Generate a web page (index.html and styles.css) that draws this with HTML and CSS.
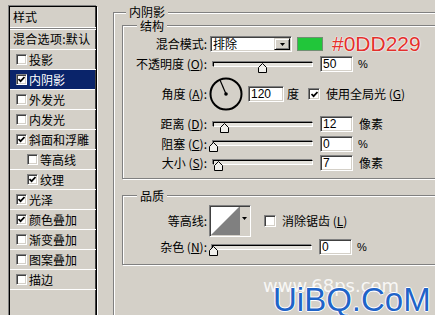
FILE: index.html
```html
<!DOCTYPE html>
<html lang="zh-CN">
<head>
<meta charset="utf-8">
<title>图层样式 - 内阴影</title>
<link rel="stylesheet" href="styles.css">
</head>
<body>
<div class="dlg">
  <div class="list">
    <div class="item head">样式</div>
    <div class="item blend">混合选项:默认</div>
    <div class="item"><span class="cb"></span>投影</div>
    <div class="item sel"><span class="cb"><svg viewBox="0 0 7 7"><polyline points="0.5,3 2.6,5.2 6.5,1"/></svg></span>内阴影</div>
    <div class="item"><span class="cb"></span>外发光</div>
    <div class="item"><span class="cb"></span>内发光</div>
    <div class="item"><span class="cb"><svg viewBox="0 0 7 7"><polyline points="0.5,3 2.6,5.2 6.5,1"/></svg></span>斜面和浮雕</div>
    <div class="item sub"><span class="cb"></span>等高线</div>
    <div class="item sub"><span class="cb"><svg viewBox="0 0 7 7"><polyline points="0.5,3 2.6,5.2 6.5,1"/></svg></span>纹理</div>
    <div class="item"><span class="cb"><svg viewBox="0 0 7 7"><polyline points="0.5,3 2.6,5.2 6.5,1"/></svg></span>光泽</div>
    <div class="item"><span class="cb"><svg viewBox="0 0 7 7"><polyline points="0.5,3 2.6,5.2 6.5,1"/></svg></span>颜色叠加</div>
    <div class="item"><span class="cb"></span>渐变叠加</div>
    <div class="item"><span class="cb"></span>图案叠加</div>
    <div class="item"><span class="cb"></span>描边</div>
  </div>

  <fieldset class="fs outer">
    <legend class="lg-outer">内阴影</legend>

    <fieldset class="fs inner struct">
      <legend class="lg-inner">结构</legend>

      <div class="row h20">
        <span class="lbl">混合模式:</span>
        <div class="field select"><span class="sel-text">排除</span><span class="drop"><svg viewBox="0 0 5 3"><polygon points="0,0 5,0 2.5,3"/></svg></span></div>
        <span class="swatch"></span>
        <span class="hex">#0DD229</span>
      </div>

      <div class="row h20">
        <span class="lbl">不透明度 (<u>O</u>):</span>
        <div class="track ml6"><span class="thumb" style="left:44px"><svg viewBox="0 0 9 10"><path d="M4.5 0.5 L8.5 4.5 V9.5 H0.5 V4.5 Z"/></svg></span></div>
        <div class="field num">50</div>
        <span class="unit pct">%</span>
      </div>

      <div class="row h40">
        <span class="lbl">角度 (<u>A</u>):</span>
        <svg class="dial" viewBox="0 0 34 34"><circle cx="17" cy="17" r="15.5"/><line x1="17" y1="17" x2="11" y2="3"/><circle class="dot" cx="17" cy="17" r="1.8"/></svg>
        <div class="field num angle">120</div>
        <span class="deg">度</span>
        <span class="cb big glob"><svg viewBox="0 0 7 7"><polyline points="0.5,3 2.6,5.2 6.5,1"/></svg></span>
        <span class="cbtext">使用全局光 (<u>G</u>)</span>
      </div>

      <div class="row h20">
        <span class="lbl">距离 (<u>D</u>):</span>
        <div class="track ml6"><span class="thumb" style="left:6px"><svg viewBox="0 0 9 10"><path d="M4.5 0.5 L8.5 4.5 V9.5 H0.5 V4.5 Z"/></svg></span></div>
        <div class="field num">12</div>
        <span class="unit">像素</span>
      </div>

      <div class="row h19">
        <span class="lbl">阻塞 (<u>C</u>):</span>
        <div class="track ml6"><span class="thumb" style="left:-5px"><svg viewBox="0 0 9 10"><path d="M4.5 0.5 L8.5 4.5 V9.5 H0.5 V4.5 Z"/></svg></span></div>
        <div class="field num">0</div>
        <span class="unit pct">%</span>
      </div>

      <div class="row h19">
        <span class="lbl">大小 (<u>S</u>):</span>
        <div class="track ml6"><span class="thumb" style="left:0px"><svg viewBox="0 0 9 10"><path d="M4.5 0.5 L8.5 4.5 V9.5 H0.5 V4.5 Z"/></svg></span></div>
        <div class="field num">7</div>
        <span class="unit">像素</span>
      </div>
    </fieldset>

    <fieldset class="fs inner quality">
      <legend class="lg-inner">品质</legend>

      <div class="row h37">
        <span class="lbl">等高线:</span>
        <div class="field contour">
          <svg viewBox="0 0 38 28"><rect x="0" y="0" width="28" height="28" fill="#fff"/><polygon points="0,28 28,0 28,28" fill="#808080"/><rect x="28" y="0" width="10" height="28" fill="#d4d0c8"/><line x1="28.5" y1="0" x2="28.5" y2="28" stroke="#808080"/><polygon points="31,10 36,10 33.5,13" fill="#000"/></svg>
        </div>
        <span class="cb big aa"></span>
        <span class="cbtext">消除锯齿 (<u>L</u>)</span>
      </div>

      <div class="row h16">
        <span class="lbl">杂色 (<u>N</u>):</span>
        <div class="track ml5"><span class="thumb" style="left:-4px"><svg viewBox="0 0 9 10"><path d="M4.5 0.5 L8.5 4.5 V9.5 H0.5 V4.5 Z"/></svg></span></div>
        <div class="field num">0</div>
        <span class="unit pct">%</span>
      </div>
    </fieldset>
  </fieldset>
</div>

<div class="wm wm-site">www.68ps.com</div>
<div class="wm wm-brand">UiBQ.CoM</div>
</body>
</html>
```

FILE: styles.css
```css
html, body {
  margin: 0;
  padding: 0;
}
body {
  width: 435px;
  height: 315px;
  overflow: hidden;
  position: relative;
  background: #d4d0c8;
  color: #000;
  font-family: "Noto Sans CJK SC", "Noto Sans", sans-serif;
  font-size: 12px;
  line-height: 14px;
}

.dlg {
  display: flex;
  align-items: flex-start;
  width: 640px;
  padding: 5px 0 0 9px;
}

/* ---------- left styles list ---------- */
.list {
  flex: none;
  width: 88px;
  height: 330px;
  margin-top: 1px;
  box-sizing: border-box;
  border: 1px solid #000;
  box-shadow: -1px -1px 0 #808080, 1px 1px 0 #fff, inset -1px 0 0 #404040;
  overflow: hidden;
}
.item {
  display: flex;
  align-items: center;
  height: 19px;
  border-bottom: 1px solid #fff;
  padding-left: 6px;
  white-space: nowrap;
  overflow: hidden;
}
.item .cb {
  margin-right: 2px;
}
.item.head {
  height: 20px;
  padding-left: 3px;
}
.item.blend {
  height: 20px;
  padding-left: 3px;
  border-top: 1px solid #808080;
  box-shadow: inset 0 1px 0 #fff;
  letter-spacing: 0.3px;
}
.item.sub {
  padding-left: 17px;
}
.item.sel {
  background: #0a246a;
  color: #fff;
  margin-right: 1px;
}

/* ---------- checkbox ---------- */
.cb {
  flex: none;
  width: 11px;
  height: 11px;
  box-sizing: border-box;
  background: #fff;
  border: 1px solid;
  border-color: #808080 #fff #fff #808080;
  box-shadow: inset 1px 1px 0 #404040, inset -1px -1px 0 #d4d0c8;
  display: flex;
  align-items: center;
  justify-content: center;
}
.cb.big {
  width: 12px;
  height: 12px;
}
.cb svg {
  width: 7px;
  height: 7px;
  display: block;
}
.cb polyline {
  fill: none;
  stroke: #000;
  stroke-width: 1.7;
}

/* ---------- fieldsets ---------- */
.fs {
  flex: none;
  min-width: 0;
  padding: 0;
  border: 1px solid #808080;
  box-shadow: inset 1px 1px 0 #fff, 1px 1px 0 #fff;
}
.fs legend {
  padding: 0 3px;
  background: #d4d0c8;
}
.outer {
  margin: 0 0 0 16px;
  width: 400px;
  height: 340px;
  box-sizing: border-box;
}
.lg-outer {
  margin-left: 12px;
  line-height: 14px;
  padding-bottom: 1px;
}
.inner {
  margin: 0 0 0 8px;
  width: 400px;
  box-sizing: border-box;
}
.lg-inner {
  margin-left: 14px;
  line-height: 13px;
}
.struct {
  padding: 2px 0 6px 0;
}
.quality {
  margin-top: 10px;
  padding: 0 0 9px 0;
}

/* ---------- rows ---------- */
.row {
  display: flex;
  align-items: center;
  white-space: nowrap;
}
.h16 { height: 16px; }
.h19 { height: 19px; }
.h20 { height: 20px; }
.h37 { height: 37px; }
.h40 { height: 40px; }

.lbl {
  flex: none;
  width: 84px;
  text-align: right;
}
u {
  text-decoration: underline;
  text-underline-offset: 1px;
}

/* sunken field */
.field {
  flex: none;
  box-sizing: border-box;
  height: 16px;
  background: #fff;
  border: 1px solid;
  border-color: #808080 #fff #fff #808080;
  box-shadow: inset 1px 1px 0 #404040, inset -1px -1px 0 #d4d0c8;
}
.num {
  width: 33px;
  margin-left: 7px;
  padding-left: 2px;
  font-family: "Liberation Sans", Arial, sans-serif;
  font-size: 12px;
  line-height: 14px;
}
.num.angle {
  width: 36px;
  margin-left: 5px;
}
.unit {
  margin-left: 6px;
}
.unit.pct {
  margin-left: 5px;
  font-family: "Liberation Sans", Arial, sans-serif;
  font-size: 11px;
}

/* select */
.select {
  width: 82px;
  margin-left: 3px;
  display: flex;
  align-items: center;
  justify-content: space-between;
  padding: 0 1px 0 2px;
}
.sel-text {
  line-height: 14px;
}
.drop {
  box-sizing: border-box;
  width: 16px;
  height: 12px;
  background: #d4d0c8;
  border: 1px solid;
  border-color: #d4d0c8 #000 #000 #d4d0c8;
  box-shadow: inset 1px 1px 0 #fff, inset -1px -1px 0 #808080;
  display: flex;
  align-items: center;
  justify-content: center;
}
.drop svg {
  width: 5px;
  height: 3px;
  display: block;
  fill: #000;
}

.swatch {
  flex: none;
  width: 26px;
  height: 14px;
  margin-left: 5px;
  box-sizing: border-box;
  background: #21c63a;
  border: 1px solid #6f8f72;
}
.hex {
  margin-left: 9px;
  font-family: "Liberation Sans", Arial, sans-serif;
  font-size: 21px;
  line-height: 20px;
  color: #e3302c;
  text-shadow: 0 0 2px #fff, 0 0 1px #fff, 0 0 1px #fff;
}

/* slider */
.track {
  position: relative;
  flex: none;
  width: 100px;
  height: 5px;
  box-sizing: border-box;
  border: 1px solid;
  border-color: #000 #fff #fff #000;
  box-shadow: -1px -1px 0 #808080;
  background: #e4e2dc;
}
.ml6 { margin-left: 6px; }
.ml5 { margin-left: 5px; }
.thumb {
  position: absolute;
  top: 0;
  width: 9px;
  height: 10px;
}
.thumb svg {
  display: block;
  width: 9px;
  height: 10px;
}
.thumb path {
  fill: #f0efeb;
  stroke: #000;
  stroke-width: 1;
}

/* angle dial */
.dial {
  flex: none;
  width: 34px;
  height: 34px;
  margin-left: 2px;
}
.dial circle {
  fill: none;
  stroke: #000;
  stroke-width: 2;
}
.dial circle.dot {
  fill: #000;
  stroke: none;
}
.dial line {
  stroke: #000;
  stroke-width: 1.2;
}
.deg {
  margin-left: 3px;
}
.glob {
  margin-left: 9px;
}
.cbtext {
  margin-left: 6px;
}

/* contour */
.contour {
  width: 42px;
  height: 32px;
  margin-left: 2px;
  padding: 1px;
  display: flex;
}
.contour svg {
  display: block;
  width: 38px;
  height: 28px;
}
.aa {
  margin-left: 13px;
}

/* watermarks */
.wm {
  position: absolute;
  white-space: nowrap;
}
.wm-site {
  left: 263px;
  top: 277px;
  font-family: "DejaVu Sans", sans-serif;
  font-size: 18px;
  line-height: 18px;
  color: rgba(255, 255, 255, 0.85);
}
.wm-brand {
  left: 273px;
  top: 283px;
  font-family: "Liberation Sans", Arial, sans-serif;
  font-size: 33px;
  line-height: 34px;
  color: #1f64c8;
  text-shadow: 1px 0 0 #fff, -1px 0 0 #fff, 0 1px 0 #fff, 0 -1px 0 #fff;
}
```
